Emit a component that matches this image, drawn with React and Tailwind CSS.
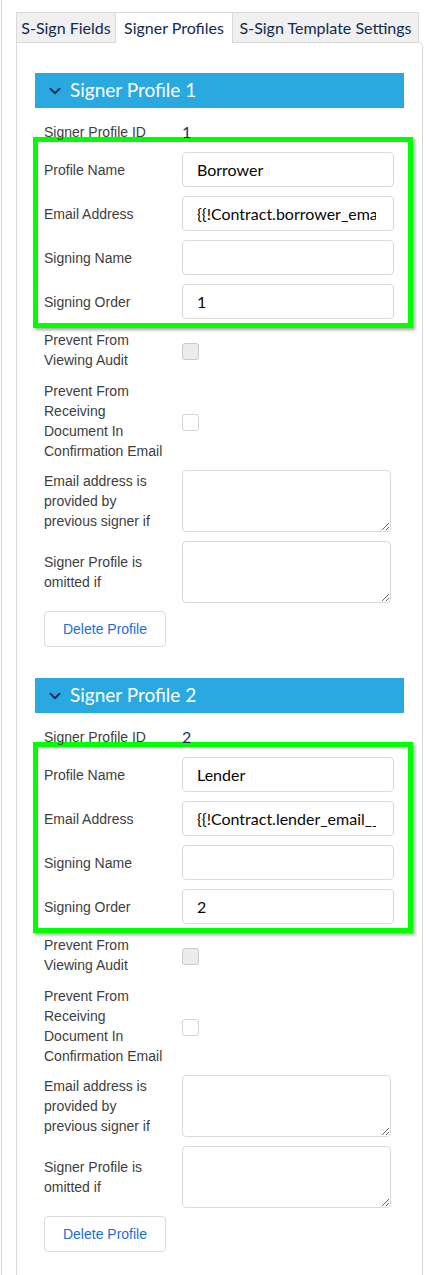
import { ChevronDown } from "lucide-react";

const profiles = [
  { id: 1, name: "Borrower", email: "{{!Contract.borrower_email__c}}", order: "1" },
  { id: 2, name: "Lender", email: "{{!Contract.lender_email__c}}", order: "2" },
];

const label =
  "w-[138px] shrink-0 text-[14px] leading-5 text-[#3e3e3c] font-[family-name:Liberation_Sans,Arial,sans-serif]";
const input =
  "h-[35px] w-[212px] rounded-[4px] border border-[#dddbda] bg-white pl-[14px] pr-[17px] text-[16px] text-[#080707] outline-none font-[family-name:Lato,sans-serif]";

function InputRow({ title, value }) {
  return (
    <div className="flex items-center">
      <div className={label}>{title}</div>
      <input type="text" defaultValue={value} className={input} />
    </div>
  );
}

function Profile({ profile }) {
  return (
    <section>
      {/* header bar */}
      <div className="flex h-[35px] items-center bg-[#2aa9e0] pl-[11px]">
        <ChevronDown className="h-[18px] w-[18px] text-[#16325c]" strokeWidth={2.8} />
        <h2 className="ml-[6px] text-[19px] text-white font-[family-name:Lato,sans-serif]">Signer Profile {profile.id}</h2>
      </div>

      <div className="pl-[9px]">
        <div className="mt-[14px] flex h-5 items-center">
          <div className={label}>Signer Profile ID</div>
          <div className="text-[16px] text-[#16325c] font-[family-name:Lato,sans-serif]">{profile.id}</div>
        </div>

        {/* highlighted fields */}
        <div className="-mt-[5px] -ml-[11px] w-[380px] border-[5px] border-[#00ff00] pb-[4px] pl-[6px] pt-[10px] shadow-[2px_2px_3px_rgba(0,0,0,0.35)]">
          <div className="flex flex-col gap-[9px]">
            <InputRow title="Profile Name" value={profile.name} />
            <InputRow title="Email Address" value={profile.email} />
            <InputRow title="Signing Name" value="" />
            <InputRow title="Signing Order" value={profile.order} />
          </div>
        </div>

        <div className="mt-[2px] flex items-center">
          <div className={label}>
            Prevent From
            <br />
            Viewing Audit
          </div>
          <span className="mt-[2px] h-[17px] w-[17px] rounded-[3px] border border-[#c9c9c9] bg-[#ececec]" />
        </div>

        <div className="mt-[11px] flex items-center">
          <div className={label}>
            Prevent From
            <br />
            Receiving
            <br />
            Document In
            <br />
            Confirmation Email
          </div>
          <span className="mt-[2px] h-[17px] w-[17px] rounded-[3px] border border-[#d4d4d4] bg-white" />
        </div>

        <div className="mt-[9px] flex items-center">
          <div className={label}>
            Email address is
            <br />
            provided by
            <br />
            previous signer if
          </div>
          <textarea className="h-[62px] w-[209px] rounded-[4px] border border-[#dddbda] bg-white outline-none" />
        </div>

        <div className="mt-[9px] flex items-center">
          <div className={label}>
            Signer Profile is
            <br />
            omitted if
          </div>
          <textarea className="h-[62px] w-[209px] rounded-[4px] border border-[#dddbda] bg-white outline-none" />
        </div>

        <button
          type="button"
          className="mt-[8px] h-[36px] w-[122px] rounded-[4px] border border-[#dddbda] bg-white text-[14px] text-[#1b6fd2] font-[family-name:Liberation_Sans,Arial,sans-serif]"
        >
          Delete Profile
        </button>
      </div>
    </section>
  );
}

export default function App() {
  return (
    <div className="ml-px min-h-[1275px] border-l border-[#dddbda] bg-white pl-[14px] pr-[3px] pt-[12px]">
      {/* tabs */}
      <div className="relative z-10 -mb-px flex text-[16px] text-[#112a4f] font-[family-name:Lato,sans-serif]">
        <div className="flex h-[31px] w-[100px] items-center justify-center border border-[#d8d8d8] bg-[#f0f0f0]">S-Sign Fields</div>
        <div className="flex h-[31px] w-[116px] items-center justify-center border-t border-[#d8d8d8] bg-white">Signer Profiles</div>
        <div className="flex h-[31px] w-[187px] items-center justify-center border border-[#d8d8d8] bg-[#f0f0f0]">S-Sign Template Settings</div>
      </div>

      {/* panel */}
      <div className="min-h-[1240px] rounded-tr-[5px] border border-b-0 border-[#dddbda] px-[18px] pt-[30px]">
        <div className="flex flex-col gap-[31px]">
          {profiles.map((p) => (
            <Profile key={p.id} profile={p} />
          ))}
        </div>
      </div>
    </div>
  );
}
